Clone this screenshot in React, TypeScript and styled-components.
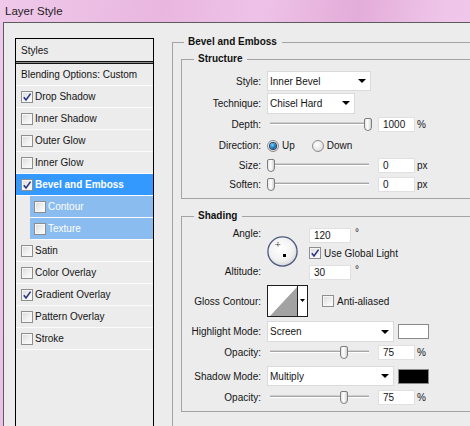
import React from "react";
import styled, { createGlobalStyle } from "styled-components";

const GlobalStyle = createGlobalStyle`
  html, body { margin: 0; padding: 0; }
  body {
    font-family: "Liberation Sans", Arial, sans-serif;
    font-size: 10px;
    color: #141414;
  }
`;

const Frame = styled.div`
  width: 470px;
  height: 426px;
  overflow: hidden;
  display: flex;
  flex-direction: column;
  background: linear-gradient(100deg, #efc9ea 0%, #e9b6e0 30%, #eec2e8 48%, #e3add9 66%, #efc5ea 82%, #f2cdee 100%);
`;

const TitleBar = styled.div`
  height: 22px;
  flex-shrink: 0;
  display: flex;
  align-items: center;
  padding-left: 5px;
  font-size: 11.5px;
  color: #1c1c1c;
`;

const Body = styled.div`
  flex: 1;
  margin-left: 3px;
  display: flex;
  align-items: flex-start;
  padding: 12px 0 0 11px;
  background: #ececec;
  border-top: 1px solid #5c5c5c;
  border-left: 1px solid #5c5c5c;
`;

const StyleList = styled.div`
  flex-shrink: 0;
  width: 137px;
  height: 400px;
  margin-top: 3px;
  border: 1px solid #000;
  background: #ececec;
`;

const HeaderRow = styled.div`
  height: 22px;
  display: flex;
  align-items: center;
  padding-left: 5px;
`;

const Divider = styled.div`
  height: 1px;
  background: #8a8a8a;
  border-top: 1px solid #111;
  border-bottom: 1px solid #111;
`;

const ListRow = styled.div<{ $active?: boolean; $sub?: boolean }>`
  height: 21px;
  display: flex;
  align-items: center;
  gap: 2px;
  padding-left: ${(p) => (p.$sub ? 4 : 5)}px;
  margin-left: ${(p) => (p.$sub ? 14 : 0)}px;
  border-bottom: 1px solid #fbfbfb;
  background: ${(p) => (p.$active ? "#3399ff" : p.$sub ? "#8abcef" : "transparent")};
  color: ${(p) => (p.$active || p.$sub ? "#fff" : "#141414")};
  font-weight: ${(p) => (p.$active ? "bold" : "normal")};
  white-space: nowrap;
`;

const Box = styled.span`
  flex-shrink: 0;
  width: 10px;
  height: 10px;
  border: 1px solid #8e8e8e;
  background: linear-gradient(135deg, #d9d9d9 0%, #f0f0f0 55%, #fdfdfd 100%);
  box-shadow: inset 0 0 0 1px #f6f6f6;
  display: flex;
  align-items: center;
  justify-content: center;
`;

const Check = ({ on }: { on?: boolean }) => (
  <Box>
    {on && (
      <svg width="10" height="10" viewBox="0 0 10 10">
        <path d="M1.8 5.2 L4 8 L8.6 1.6" fill="none" stroke="#2a3582" strokeWidth="1.6" />
      </svg>
    )}
  </Box>
);

const RightPane = styled.div`
  flex-shrink: 0;
  width: 330px;
  margin-left: 18px;
`;

const Group = styled.fieldset<{ $pt: number; $pb: number; $pl: number; $mt?: number; $h?: number }>`
  margin: ${(p) => p.$mt ?? 0}px 0 0 0;
  padding: ${(p) => p.$pt}px 0 ${(p) => p.$pb}px ${(p) => p.$pl}px;
  border: 1px solid #a3a3a3;
  min-width: 0;
  ${(p) => (p.$h ? `height: ${p.$h}px;` : "")}
`;

const Legend = styled.legend<{ $ml: number }>`
  font-weight: bold;
  line-height: 14px;
  padding: 0 5px 0 4px;
  margin-left: ${(p) => p.$ml}px;
  color: #111;
`;

const FormRow = styled.div<{ $h: number; $mt?: number; $top?: boolean }>`
  display: flex;
  align-items: ${(p) => (p.$top ? "flex-start" : "center")};
  height: ${(p) => p.$h}px;
  margin-top: ${(p) => p.$mt ?? 0}px;
`;

const Label = styled.div`
  flex-shrink: 0;
  width: 79px;
  margin-right: 6px;
  text-align: right;
  white-space: nowrap;
`;

const LabelCol = styled.div`
  flex-shrink: 0;
  width: 79px;
  height: 52px;
  margin-right: 6px;
  display: flex;
  flex-direction: column;
  justify-content: space-between;
  align-items: flex-end;
  line-height: 14px;
`;

const Select = styled.div<{ $w: number; $h: number }>`
  flex-shrink: 0;
  box-sizing: border-box;
  width: ${(p) => p.$w}px;
  height: ${(p) => p.$h}px;
  display: flex;
  align-items: center;
  justify-content: space-between;
  padding: 0 4px 0 2px;
  background: #fff;
  border: 1px solid #dadada;
`;

const Arrow = styled.span`
  width: 0;
  height: 0;
  border-left: 4px solid transparent;
  border-right: 4px solid transparent;
  border-top: 4px solid #000;
`;

const NumField = styled.div<{ $w: number; $mt?: number }>`
  flex-shrink: 0;
  box-sizing: border-box;
  width: ${(p) => p.$w}px;
  height: 15px;
  margin-top: ${(p) => p.$mt ?? 0}px;
  padding-left: 4px;
  line-height: 13px;
  background: #fff;
  border: 1px solid #e0e0e0;
`;

const Unit = styled.span<{ $sup?: boolean }>`
  margin-left: ${(p) => (p.$sup ? 4 : 2)}px;
  align-self: ${(p) => (p.$sup ? "flex-start" : "center")};
  line-height: ${(p) => (p.$sup ? "9px" : "normal")};
`;

const Slider = styled.div`
  flex-shrink: 0;
  position: relative;
  width: 105px;
  height: 13px;
  margin-right: 6px;
`;

const Track = styled.div`
  position: absolute;
  left: 3px;
  right: 3px;
  top: 5px;
  height: 1px;
  background: #a6a6a6;
  border-bottom: 1px solid #fff;
  box-shadow: 0 -1px 0 #d0d0d0;
`;

const Thumb = styled.div`
  position: absolute;
  top: 0;
  width: 6px;
  height: 11px;
  border: 1px solid #7d7d7d;
  border-radius: 2px 2px 4px 4px;
  background: linear-gradient(90deg, #e6e6e6 0%, #ffffff 45%, #d2d2d2 100%);
`;

const SliderField = ({ value }: { value: number }) => (
  <Slider>
    <Track />
    <Thumb style={{ left: Math.round(value * 97) }} />
  </Slider>
);

const Radio = styled.span<{ $on?: boolean }>`
  flex-shrink: 0;
  box-sizing: border-box;
  width: 12px;
  height: 12px;
  border-radius: 50%;
  border: 1px solid #8c8c8c;
  background: radial-gradient(circle at 40% 35%, #ffffff 0%, #e8e8e8 55%, #cfcfcf 100%);
  display: flex;
  align-items: center;
  justify-content: center;
  &::after {
    content: "";
    display: ${(p) => (p.$on ? "block" : "none")};
    width: 6px;
    height: 6px;
    border-radius: 50%;
    background: radial-gradient(circle at 40% 35%, #7fd0ff 0%, #1a7cc4 50%, #0b3f70 100%);
    box-shadow: 0 0 0 1px #2b3f5a;
  }
`;

const Option = styled.span<{ $ml?: number }>`
  display: flex;
  align-items: center;
  gap: 3px;
  margin-left: ${(p) => p.$ml ?? 0}px;
`;

const AngleDial = styled.svg`
  flex-shrink: 0;
  margin-top: 9px;
  margin-right: 11px;
`;

const AngleCol = styled.div`
  display: flex;
  flex-direction: column;
`;

const FieldLine = styled.div<{ $mt?: number }>`
  display: flex;
  align-items: center;
  margin-top: ${(p) => p.$mt ?? 0}px;
`;

const CheckLabel = styled.span<{ $ml?: number }>`
  display: flex;
  align-items: center;
  gap: 3px;
  margin-left: ${(p) => p.$ml ?? 0}px;
  white-space: nowrap;
`;

const Swatch = styled.div<{ $color: string }>`
  flex-shrink: 0;
  box-sizing: border-box;
  width: 31px;
  height: 15px;
  margin-left: 4px;
  background: ${(p) => p.$color};
  border: 1px solid #8a8a8a;
`;

const ContourPicker = () => (
  <svg width="41" height="32" viewBox="0 0 41 32">
    <rect x="0.5" y="0.5" width="40" height="31" fill="#fff" stroke="#1e1e1e" />
    <polygon points="3,31 30,2 30,31" fill="#a2a2a2" />
    <line x1="30.5" y1="0" x2="30.5" y2="32" stroke="#1e1e1e" />
    <polygon points="33,14 38,14 35.5,17" fill="#000" />
  </svg>
);

const layers: { name: string; on?: boolean; active?: boolean; sub?: boolean }[] = [
  { name: "Drop Shadow", on: true },
  { name: "Inner Shadow" },
  { name: "Outer Glow" },
  { name: "Inner Glow" },
  { name: "Bevel and Emboss", on: true, active: true },
  { name: "Contour", sub: true },
  { name: "Texture", sub: true },
  { name: "Satin" },
  { name: "Color Overlay" },
  { name: "Gradient Overlay", on: true },
  { name: "Pattern Overlay" },
  { name: "Stroke" },
];

export default function App() {
  return (
    <>
      <GlobalStyle />
      <Frame>
        <TitleBar>Layer Style</TitleBar>
        <Body>
          <StyleList>
            <HeaderRow>Styles</HeaderRow>
            <Divider />
            <ListRow>Blending Options: Custom</ListRow>
            {layers.map((l) => (
              <ListRow key={l.name} $active={l.active} $sub={l.sub}>
                <Check on={l.on} />
                {l.name}
              </ListRow>
            ))}
          </StyleList>

          <RightPane>
            <Group $pt={3} $pb={0} $pl={8} $h={430}>
              <Legend $ml={3}>Bevel and Emboss</Legend>

              <Group $pt={4} $pb={4} $pl={0}>
                <Legend $ml={12}>Structure</Legend>
                <FormRow $h={22}>
                  <Label>Style:</Label>
                  <Select $w={104} $h={20}>
                    Inner Bevel
                    <Arrow />
                  </Select>
                </FormRow>
                <FormRow $h={22}>
                  <Label>Technique:</Label>
                  <Select $w={88} $h={21}>
                    Chisel Hard
                    <Arrow />
                  </Select>
                </FormRow>
                <FormRow $h={21}>
                  <Label>Depth:</Label>
                  <SliderField value={1} />
                  <NumField $w={37}>1000</NumField>
                  <Unit>%</Unit>
                </FormRow>
                <FormRow $h={21}>
                  <Label>Direction:</Label>
                  <Option>
                    <Radio $on />
                    Up
                  </Option>
                  <Option $ml={17}>
                    <Radio />
                    Down
                  </Option>
                </FormRow>
                <FormRow $h={19}>
                  <Label>Size:</Label>
                  <SliderField value={0} />
                  <NumField $w={37}>0</NumField>
                  <Unit>px</Unit>
                </FormRow>
                <FormRow $h={19}>
                  <Label>Soften:</Label>
                  <SliderField value={0} />
                  <NumField $w={37}>0</NumField>
                  <Unit>px</Unit>
                </FormRow>
              </Group>

              <Group $pt={4} $pb={6} $pl={0} $mt={10}>
                <Legend $ml={12}>Shading</Legend>
                <FormRow $h={53} $top>
                  <LabelCol>
                    <span>Angle:</span>
                    <span>Altitude:</span>
                  </LabelCol>
                  <AngleDial width="31" height="31" viewBox="0 0 31 31">
                    <defs>
                      <radialGradient id="dialFill" cx="45%" cy="40%" r="60%">
                        <stop offset="0%" stopColor="#ffffff" />
                        <stop offset="70%" stopColor="#f1f1f1" />
                        <stop offset="100%" stopColor="#d6d6d6" />
                      </radialGradient>
                    </defs>
                    <circle cx="15.5" cy="15.5" r="14.6" fill="url(#dialFill)" stroke="#4c5a7e" strokeWidth="1.3" />
                    <line x1="8.5" y1="8.5" x2="13.5" y2="8.5" stroke="#222" strokeWidth="0.8" strokeDasharray="1 0.6" />
                    <line x1="11" y1="6" x2="11" y2="11" stroke="#222" strokeWidth="0.8" strokeDasharray="1 0.6" />
                    <rect x="16" y="18" width="3" height="3" fill="#000" />
                  </AngleDial>
                  <AngleCol>
                    <FieldLine $mt={1}>
                      <NumField $w={42}>120</NumField>
                      <Unit $sup>°</Unit>
                    </FieldLine>
                    <FieldLine $mt={4}>
                      <CheckLabel>
                        <Check on />
                        Use Global Light
                      </CheckLabel>
                    </FieldLine>
                    <FieldLine $mt={6}>
                      <NumField $w={42}>30</NumField>
                      <Unit $sup>°</Unit>
                    </FieldLine>
                  </AngleCol>
                </FormRow>
                <FormRow $h={32} $mt={5}>
                  <Label>Gloss Contour:</Label>
                  <ContourPicker />
                  <CheckLabel $ml={14}>
                    <Check />
                    Anti-aliased
                  </CheckLabel>
                </FormRow>
                <FormRow $h={21} $mt={4}>
                  <Label>Highlight Mode:</Label>
                  <Select $w={127} $h={21}>
                    Screen
                    <Arrow />
                  </Select>
                  <Swatch $color="#ffffff" />
                </FormRow>
                <FormRow $h={16} $mt={2}>
                  <Label>Opacity:</Label>
                  <SliderField value={0.75} />
                  <NumField $w={37}>75</NumField>
                  <Unit>%</Unit>
                </FormRow>
                <FormRow $h={20} $mt={6}>
                  <Label>Shadow Mode:</Label>
                  <Select $w={127} $h={20}>
                    Multiply
                    <Arrow />
                  </Select>
                  <Swatch $color="#000000" />
                </FormRow>
                <FormRow $h={16} $mt={3}>
                  <Label>Opacity:</Label>
                  <SliderField value={0.75} />
                  <NumField $w={37}>75</NumField>
                  <Unit>%</Unit>
                </FormRow>
              </Group>
            </Group>
          </RightPane>
        </Body>
      </Frame>
    </>
  );
}
